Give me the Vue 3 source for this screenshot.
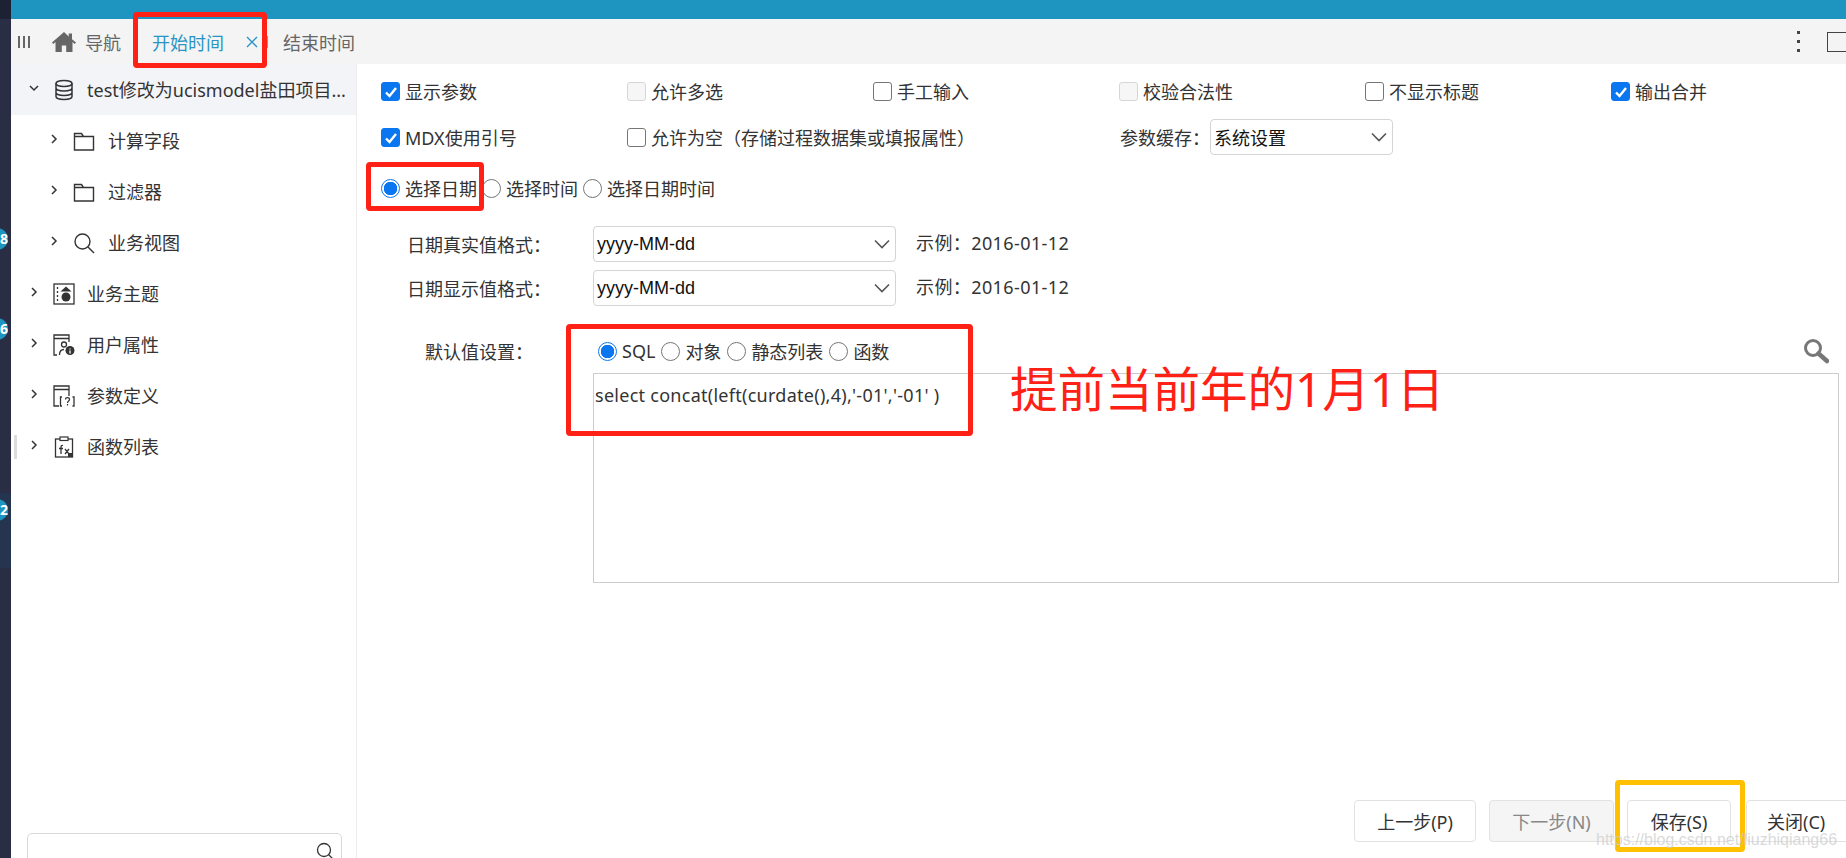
<template>
  <div class="page">
    <aside class="rail">
      <span class="rail-top"></span>
      <span class="rail-low"></span>
      <span class="rail-badge badge-a">8</span>
      <span class="rail-badge badge-b">6</span>
      <span class="rail-badge badge-c">2</span>
    </aside>

    <div class="shell">
      <header class="topbar"></header>

      <nav class="tabbar">
        <span class="bars"><i></i><i></i><i></i></span>
        <svg class="home" viewBox="0 0 24 20" width="24" height="20">
          <path fill="#666" d="M12 0 0 10.4l1.3 1.5L3.500 10v10h6.300v-6.500h4.400V20h6.300V10l2.200 1.900 1.300-1.500L20 7.200V1.500h-3.300v2.900z" />
        </svg>
        <span class="tab nav-tab">导航</span>
        <span class="tab active-tab">开始时间</span>
        <svg class="tab-close" viewBox="0 0 12 12" width="12" height="12">
          <path d="M1 1l10 10M11 1 1 11" stroke="#2a95c5" stroke-width="1.400" fill="none" />
        </svg>
        <span class="tab-sep"></span>
        <span class="tab end-tab">结束时间</span>
        <span class="tab-tools">
          <span class="kebab"><i></i><i></i><i></i></span>
          <span class="max-box"></span>
        </span>
      </nav>

      <div class="body">
        <aside class="sidebar">
          <div
            v-for="row in treeRows"
            :key="row.label"
            class="tree-row"
            :class="{ selected: row.selected, child: row.child }"
          >
            <svg class="chevron" :class="{ open: row.selected }" viewBox="0 0 10 10" width="10" height="10">
              <path d="M3 1l4 4-4 4" fill="none" stroke="#333" stroke-width="1.500" />
            </svg>
            <svg class="tree-icon" viewBox="0 0 22 22" width="22" height="22" v-html="icons[row.icon]"></svg>
            <span class="tree-label">{{ row.label }}</span>
          </div>
          <span class="scroll-mark"></span>
          <div class="side-search">
            <svg viewBox="0 0 18 18" width="18" height="18">
              <circle cx="8" cy="8" r="6.500" fill="none" stroke="#333" stroke-width="1.300" />
              <path d="M12.700 12.700 17 17" stroke="#333" stroke-width="1.300" />
            </svg>
          </div>
        </aside>

        <main class="form">
          <div class="check-grid">
            <label v-for="item in firstRow" :key="item.label" class="check-item">
              <span class="box" :class="{ on: item.on, off: item.disabled }">
                <svg v-if="item.on" viewBox="0 0 18 18" width="18" height="18">
                  <path d="M4 9.500l3.500 3.500L14 5" fill="none" stroke="#fff" stroke-width="2.400" />
                </svg>
              </span>
              {{ item.label }}
            </label>
            <label class="check-item">
              <span class="box on">
                <svg viewBox="0 0 18 18" width="18" height="18">
                  <path d="M4 9.500l3.500 3.500L14 5" fill="none" stroke="#fff" stroke-width="2.400" />
                </svg>
              </span>
              MDX使用引号
            </label>
            <label class="check-item wide-item">
              <span class="box"></span>
              允许为空（存储过程数据集或填报属性）
            </label>
            <div class="cache-item">
              <span>参数缓存：</span>
              <div class="select cache-select">系统设置<svg class="caret" viewBox="0 0 16 10" width="16" height="10"><path d="M1 1.500l7 7 7-7" fill="none" stroke="#555" stroke-width="1.600" /></svg></div>
            </div>
          </div>

          <div class="radio-row">
            <label class="radio-item"><span class="dot on"></span>选择日期</label>
            <label class="radio-item"><span class="dot"></span>选择时间</label>
            <label class="radio-item"><span class="dot"></span>选择日期时间</label>
          </div>

          <div class="formats">
            <div v-for="row in formatRows" :key="row" class="format-row">
              <span class="format-label">{{ row }}：</span>
              <div class="select format-select">yyyy-MM-dd<svg class="caret" viewBox="0 0 16 10" width="16" height="10"><path d="M1 1.500l7 7 7-7" fill="none" stroke="#555" stroke-width="1.600" /></svg></div>
              <span class="sample">示例：2016-01-12</span>
            </div>
          </div>

          <div class="default-row">
            <span class="default-label">默认值设置：</span>
            <div class="default-radios">
              <label class="radio-item"><span class="dot on"></span>SQL</label>
              <label class="radio-item"><span class="dot"></span>对象</label>
              <label class="radio-item"><span class="dot"></span>静态列表</label>
              <label class="radio-item"><span class="dot"></span>函数</label>
            </div>
            <svg class="big-search" viewBox="0 0 26 26" width="26" height="26">
              <circle cx="10" cy="10" r="7.500" fill="none" stroke="#777" stroke-width="3" />
              <path d="M15.500 15.500 24 23" stroke="#777" stroke-width="4.500" stroke-linecap="round" />
            </svg>
          </div>

          <div class="sql-box">select concat(left(curdate(),4),'-01','-01' )</div>

          <footer class="actions">
            <button class="btn prev">上一步(P)</button>
            <button class="btn next" disabled>下一步(N)</button>
            <button class="btn save">保存(S)</button>
            <button class="btn close">关闭(C)</button>
          </footer>
        </main>
      </div>
    </div>

    <!-- hand drawn marks on top of the screenshot -->
    <span class="mark tab-mark"></span>
    <span class="mark radio-mark"></span>
    <span class="mark sql-mark"></span>
    <span class="mark save-mark"></span>
    <span class="note">提前当前年的1月1日</span>
    <span class="watermark">https://blog.csdn.net/liuzhiqiang66</span>
  </div>
</template>

<script setup>
const icons = {
  db: '<g fill="none" stroke="#333" stroke-width="1.500"><ellipse cx="11" cy="4.500" rx="8" ry="3"/><path d="M3 4.500v13c0 1.700 3.600 3 8 3s8-1.300 8-3v-13M3 9c0 1.700 3.600 3 8 3s8-1.300 8-3M3 13.500c0 1.700 3.600 3 8 3s8-1.300 8-3"/></g>',
  folder: '<path d="M1.500 20V3.500h7l2 3h10V20z M1.500 6.500h9" fill="none" stroke="#333" stroke-width="1.400"/>',
  search: '<circle cx="9.500" cy="9.500" r="7.500" fill="none" stroke="#333" stroke-width="1.400"/><path d="M15 15l6 6" stroke="#333" stroke-width="1.400"/>',
  subject: '<rect x="1" y="1" width="20" height="20" fill="none" stroke="#333" stroke-width="1.300"/><path d="M4.500 4v15" stroke="#333" stroke-width="1.300" stroke-dasharray="2 2"/><path d="M13 3.500l5.500 5h-11z" fill="#333"/><circle cx="13" cy="14" r="4.500" fill="#333"/>',
  user: '<path d="M16 8V1H1v20h3M1 4.500h15" fill="none" stroke="#333" stroke-width="1.300"/><circle cx="11" cy="10.500" r="2.500" fill="none" stroke="#333" stroke-width="1.300"/><path d="M6.500 21c0-3.500 2-5.500 4.500-5.500" fill="none" stroke="#333" stroke-width="1.300"/><circle cx="17" cy="16.500" r="4.500" fill="#333"/><path d="M17 14.500v1M17 16.500v3" stroke="#fff" stroke-width="1.300"/>',
  param: '<path d="M16 11V1H1v20h5M1 4.500h15M9 12H7.500v9H9M19.500 12H21v9h-1.500" fill="none" stroke="#333" stroke-width="1.300"/><path d="M12.500 14.500c0-2.500 4-2.500 4 0 0 1.500-2 1.500-2 3.500M14.500 19v1.500" fill="none" stroke="#333" stroke-width="1.200"/>',
  fn: '<rect x="2.500" y="3" width="17" height="18" fill="none" stroke="#333" stroke-width="1.300"/><rect x="7" y="1" width="8" height="3.500" fill="#fff" stroke="#333" stroke-width="1.200"/><path d="M10 9.500C8.500 9 8 10 8 11.500V18M6 12.500h4M12 13l4 5M16 13l-4 5" fill="none" stroke="#333" stroke-width="1.300"/><path d="M15 17h4.500v4H15z" fill="#333"/>',
}

const treeRows = [
  { label: 'test修改为ucismodel盐田项目...', icon: 'db', selected: true },
  { label: '计算字段', icon: 'folder', child: true },
  { label: '过滤器', icon: 'folder', child: true },
  { label: '业务视图', icon: 'search', child: true },
  { label: '业务主题', icon: 'subject' },
  { label: '用户属性', icon: 'user' },
  { label: '参数定义', icon: 'param' },
  { label: '函数列表', icon: 'fn' },
]

const firstRow = [
  { label: '显示参数', on: true },
  { label: '允许多选', disabled: true },
  { label: '手工输入' },
  { label: '校验合法性', disabled: true },
  { label: '不显示标题' },
  { label: '输出合并', on: true },
]

const formatRows = ['日期真实值格式', '日期显示值格式']
</script>

<style>
html,
body {
  margin: 0;
  overflow: hidden;
}
</style>

<style scoped>
.page {
  position: relative;
  display: flex;
  width: 1846px;
  height: 858px;
  overflow: hidden;
  background: #fff;
  color: #333;
  font-family: "Noto Sans", "Noto Sans CJK SC", sans-serif;
  font-size: 18px;
}

.rail {
  position: relative;
  flex: 0 0 11px;
  overflow: hidden;
  background: #2a2e45;
}

.rail-top {
  position: absolute;
  top: 0;
  left: 0;
  width: 11px;
  height: 19px;
  background: #1c2233;
}

.rail-low {
  position: absolute;
  top: 493px;
  left: 0;
  width: 11px;
  height: 75px;
  background: #25344f;
}

.rail-badge {
  position: absolute;
  left: -14px;
  width: 22px;
  height: 22px;
  border-radius: 50%;
  background: #1e95c0;
  color: #fff;
  font-size: 14px;
  font-weight: 700;
  line-height: 22px;
  text-align: right;
}

.badge-a {
  top: 228px;
}

.badge-b {
  top: 318px;
}

.badge-c {
  top: 499px;
}

.shell {
  flex: 1;
  display: flex;
  flex-direction: column;
  min-width: 0;
}

.topbar {
  flex: 0 0 19px;
  background: #1e95c0;
}

.tabbar {
  flex: 0 0 45px;
  display: flex;
  align-items: center;
  background: #f4f4f4;
  color: #666;
}

.bars {
  display: flex;
  gap: 3px;
  margin-left: 7px;
}

.bars i {
  width: 2px;
  height: 12px;
  background: #666;
}

.home {
  margin-left: 22px;
}

.tab {
  white-space: nowrap;
}

.nav-tab {
  margin-left: 9px;
}

.active-tab {
  margin-left: 31px;
  color: #2a95c5;
}

.tab-close {
  margin-left: 22px;
}

.tab-sep {
  width: 1px;
  height: 12px;
  margin-left: 9px;
  background: #999;
}

.end-tab {
  margin-left: 15px;
}

.tab-tools {
  display: flex;
  align-items: center;
  margin-left: auto;
}

.kebab {
  display: flex;
  flex-direction: column;
  gap: 6px;
  margin-right: 27px;
}

.kebab i {
  width: 3px;
  height: 3px;
  background: #444;
}

.max-box {
  width: 24px;
  height: 20px;
  margin-right: -5px;
  border: 1px solid #444;
  box-sizing: border-box;
}

.body {
  flex: 1;
  display: flex;
  min-height: 0;
}

.sidebar {
  position: relative;
  flex: 0 0 346px;
  box-sizing: border-box;
  border-right: 1px solid #ececec;
}

.tree-row {
  display: flex;
  align-items: center;
  height: 51px;
  padding-left: 18px;
  white-space: nowrap;
}

.tree-row.selected {
  background: #f3f4f8;
}

.tree-row.child {
  padding-left: 38px;
}

.chevron {
  flex: 0 0 10px;
  margin-top: -4px;
}

.chevron.open {
  transform: rotate(90deg);
}

.tree-icon {
  flex: 0 0 22px;
  margin-left: 14px;
}

.tree-label {
  margin-left: 12px;
  margin-top: -2px;
}

.child .tree-label {
  margin-left: 13px;
}

.scroll-mark {
  position: absolute;
  top: 371px;
  left: 3px;
  width: 3px;
  height: 24px;
  background: #ddd;
}

.side-search {
  position: absolute;
  top: 769px;
  left: 16px;
  width: 315px;
  height: 40px;
  box-sizing: border-box;
  border: 1px solid #d9d9d9;
  border-radius: 5px;
}

.side-search svg {
  position: absolute;
  top: 8px;
  right: 7px;
}

.form {
  position: relative;
  flex: 1;
  min-width: 0;
  padding: 0 0 0 24px;
}

.check-grid {
  display: grid;
  grid-template-columns: repeat(6, 246px);
  grid-auto-rows: 46px;
  align-items: center;
  padding-top: 4px;
}

.check-item {
  display: flex;
  align-items: center;
  gap: 5px;
  white-space: nowrap;
}

.wide-item {
  grid-column: span 2;
}

.cache-item {
  grid-column: span 3;
  display: flex;
  align-items: center;
  gap: 0;
  margin-left: 1px;
}

.box {
  flex: 0 0 19px;
  width: 19px;
  height: 19px;
  box-sizing: border-box;
  border: 1px solid #767676;
  border-radius: 3px;
  background: #fff;
}

.box svg {
  display: block;
  margin: 0;
}

.box.on {
  border-color: #0a77f0;
  background: #0a77f0;
}

.box.off {
  border-color: #d6d6d6;
  background: #f6f6f6;
}

.radio-row {
  display: flex;
  align-items: center;
  height: 30px;
  margin-top: 13px;
  gap: 5px;
}

.radio-item {
  display: flex;
  align-items: center;
  gap: 5px;
  white-space: nowrap;
}

.dot {
  flex: 0 0 19px;
  width: 19px;
  height: 19px;
  box-sizing: border-box;
  border: 1px solid #767676;
  border-radius: 50%;
  background: #fff;
}

.dot.on {
  border-color: #0a77f0;
  background: radial-gradient(circle, #0a77f0 0 6.500px, #fff 7px);
}

.select {
  position: relative;
  display: flex;
  align-items: center;
  box-sizing: border-box;
  height: 36px;
  padding-left: 3px;
  border: 1px solid #d4d4d4;
  border-radius: 4px;
  background: #fff;
  color: #111;
  font-family: "Liberation Sans", "Noto Sans CJK SC", sans-serif;
}

.caret {
  position: absolute;
  top: 12px;
  right: 5px;
}

.cache-select {
  width: 183px;
}

.formats {
  display: flex;
  flex-direction: column;
  gap: 8px;
  margin-top: 23px;
}

.format-row {
  display: flex;
  align-items: center;
  height: 36px;
}

.format-label {
  flex: 0 0 212px;
  padding-left: 26px;
  box-sizing: border-box;
}

.format-select {
  width: 303px;
}

.sample {
  margin-left: 20px;
  margin-top: -5px;
  letter-spacing: 0.4px;
}

.default-row {
  position: relative;
  display: flex;
  align-items: center;
  height: 30px;
  margin-top: 30px;
}

.default-label {
  flex: 0 0 217px;
  padding-left: 44px;
  box-sizing: border-box;
}

.default-radios {
  display: flex;
  gap: 6px;
}

.big-search {
  position: absolute;
  top: 2px;
  left: 1422px;
}

.sql-box {
  box-sizing: border-box;
  width: 1246px;
  height: 210px;
  margin: 7px 0 0 212px;
  padding: 7px 1px;
  border: 1px solid #ccc;
  line-height: 28px;
  letter-spacing: 0.27px;
}

.actions {
  display: flex;
  gap: 13px;
  margin-top: 217px;
  margin-left: 973px;
}

.btn {
  flex: 0 0 auto;
  height: 42px;
  box-sizing: border-box;
  border: 1px solid #e2e2e2;
  border-radius: 4px;
  background: #fff;
  color: #333;
  font: inherit;
}

.prev {
  width: 122px;
}

.next {
  width: 125px;
  background: #f5f5f5;
  color: #888;
}

.save {
  width: 104px;
}

.close {
  width: 120px;
  margin-left: 2px;
  text-align: left;
  padding-left: 20px;
}

.mark {
  position: absolute;
  box-sizing: border-box;
  border: 5px solid #ff2016;
  border-radius: 4px;
}

.tab-mark {
  top: 12px;
  left: 133px;
  width: 134px;
  height: 56px;
}

.radio-mark {
  top: 162px;
  left: 366px;
  width: 118px;
  height: 49px;
}

.sql-mark {
  top: 324px;
  left: 566px;
  width: 407px;
  height: 112px;
}

.save-mark {
  top: 780px;
  left: 1615px;
  width: 130px;
  height: 72px;
  border-color: #ffc000;
}

.note {
  position: absolute;
  top: 356px;
  left: 1010px;
  color: #ff2016;
  font-size: 47.5px;
  line-height: 66px;
  white-space: nowrap;
}

.watermark {
  position: absolute;
  top: 830px;
  left: 1596px;
  color: rgba(205, 205, 205, 0.75);
  font-family: "Liberation Sans", sans-serif;
  font-size: 16px;
  line-height: 20px;
  white-space: nowrap;
}
</style>
